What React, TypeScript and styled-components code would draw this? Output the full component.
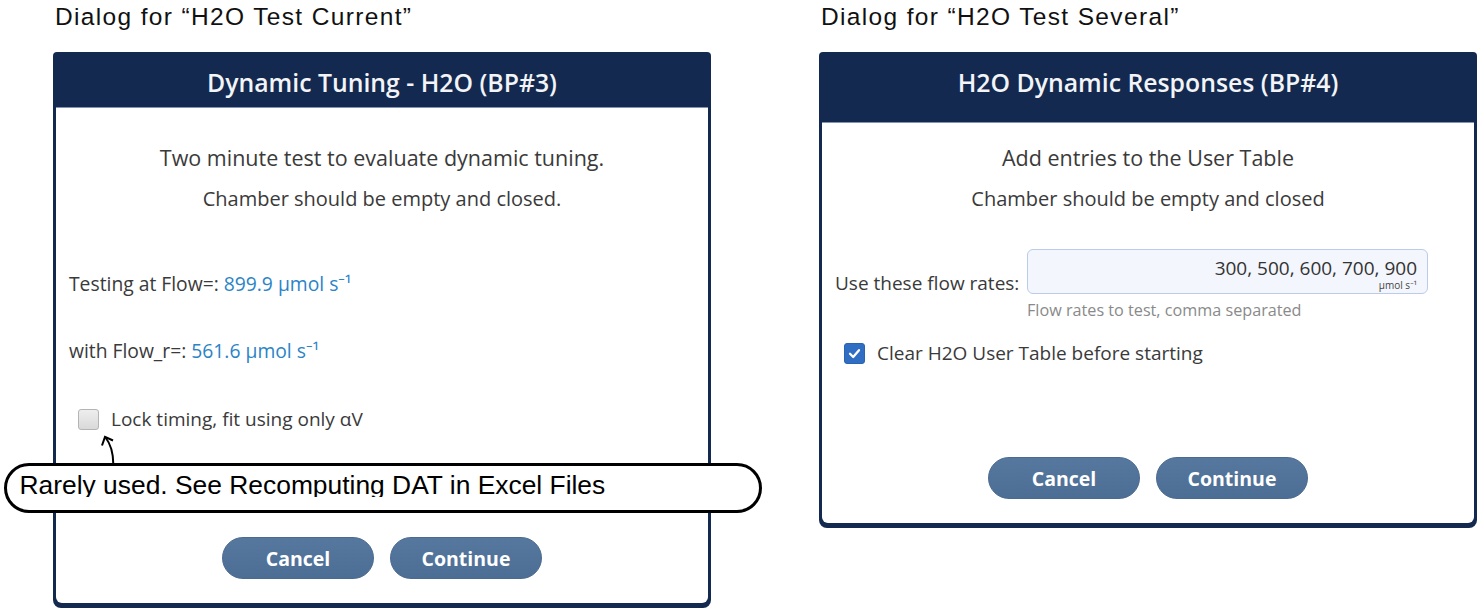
import React from "react";
import styled, { createGlobalStyle } from "styled-components";

const GlobalStyle = createGlobalStyle`
  html, body { margin: 0; padding: 0; background: #ffffff; }
  body { font-family: "Open Sans", "Noto Sans", sans-serif; }
`;

const NAVY = "#13294f";
const TEXT = "#3a3a3a";
const BLUE = "#2b84c7";

const Page = styled.div`
  position: relative;
  width: 1484px;
  height: 612px;
  display: flex;
  gap: 108px;
  padding-left: 53px;
  box-sizing: border-box;
  overflow: hidden;
`;

const Column = styled.div`
  display: flex;
  flex-direction: column;
  width: 658px;
`;

const Caption = styled.div`
  font-family: "Liberation Sans", Arial, sans-serif;
  font-size: 24.5px;
  letter-spacing: 1.35px;
  line-height: 28px;
  padding-top: 3px;
  margin-left: 2px;
  height: 52px;
  box-sizing: border-box;
  color: #111;
  white-space: nowrap;
`;

const Dialog = styled.div`
  width: 658px;
  background: ${NAVY};
  border-radius: 4px 4px 8px 8px;
  display: flex;
  flex-direction: column;
`;

const Header = styled.div<{ $h: number }>`
  height: ${(p) => p.$h}px;
  box-sizing: border-box;
  padding-top: 15px;
  text-align: center;
  color: #f2f4f7;
  font-size: 24.8px;
  font-weight: 600;
  line-height: 30px;
  white-space: nowrap;
`;

const Body = styled.div`
  background: #ffffff;
  margin: 0 3px 5px;
  border-top: 1px solid #8494b0;
  border-radius: 0 0 6px 6px;
  padding: 0 13px 24px;
  display: flex;
  flex-direction: column;
  color: ${TEXT};
`;

const Intro = styled.div<{ $mt: number; $size: number }>`
  margin-top: ${(p) => p.$mt}px;
  text-align: center;
  font-size: ${(p) => p.$size}px;
  line-height: 28px;
  white-space: nowrap;
`;

const InfoLine = styled.div<{ $mt: number }>`
  margin-top: ${(p) => p.$mt}px;
  font-size: 19.3px;
  line-height: 28px;
  white-space: nowrap;
`;

const Value = styled.span`
  color: ${BLUE};
`;

const CheckRow = styled.label<{ $mt: number }>`
  margin-top: ${(p) => p.$mt}px;
  margin-left: 9px;
  height: 28px;
  display: flex;
  align-items: center;
  gap: 12px;
  font-size: 19px;
  line-height: 28px;
  white-space: nowrap;
`;

const Box = styled.span<{ $checked?: boolean }>`
  width: 21px;
  height: 21px;
  box-sizing: border-box;
  border-radius: 3px;
  display: inline-flex;
  align-items: center;
  justify-content: center;
  flex: none;
  ${(p) =>
    p.$checked
      ? `background: #2f6ec2; border: 1px solid #2a63ae;`
      : `background: linear-gradient(#eeeeee, #d9d9d9); border: 1px solid #b4b4b4;`}
`;

const Buttons = styled.div<{ $mt: number }>`
  margin-top: ${(p) => p.$mt}px;
  display: flex;
  justify-content: center;
  gap: 16px;
`;

const Button = styled.button`
  width: 152px;
  height: 42px;
  border-radius: 21px;
  border: 1px solid #4a6a90;
  background: linear-gradient(#56789e, #4c6d94);
  color: #ffffff;
  font-family: "Open Sans", sans-serif;
  font-size: 19.5px;
  font-weight: 700;
  padding: 0;
  cursor: pointer;
`;

const FlowRow = styled.div`
  margin-top: 36px;
  display: grid;
  grid-template-columns: 192px 401px;
`;

const FlowLabel = styled.div`
  margin-top: 20px;
  font-size: 19px;
  line-height: 28px;
  white-space: nowrap;
`;

const InputBox = styled.div`
  height: 45px;
  box-sizing: border-box;
  border: 1px solid #bccbea;
  border-radius: 6px;
  background: #f3f6fd;
  padding: 7px 10px 0;
  text-align: right;
  color: #333;
`;

const InputValue = styled.div`
  font-size: 19px;
  line-height: 22px;
`;

const InputUnit = styled.div`
  font-size: 10px;
  line-height: 12px;
  color: #444;
`;

const Helper = styled.div`
  grid-column: 2;
  margin-top: 3px;
  font-size: 16.2px;
  line-height: 20px;
  color: #8a8a8a;
  white-space: nowrap;
`;

const Callout = styled.div`
  position: absolute;
  left: 4px;
  top: 463px;
  width: 758px;
  height: 50px;
  box-sizing: border-box;
  border: 3.5px solid #000;
  border-radius: 25px;
  background: #ffffff;
  padding-left: 12.5px;
  font-family: "Liberation Sans", Arial, sans-serif;
  font-size: 26.4px;
  color: #000;
`;

const CalloutText = styled.div`
  height: 30.5px;
  box-sizing: border-box;
  overflow: hidden;
  line-height: 30px;
  padding-top: 3.5px;
  white-space: nowrap;
`;

const Arrow = styled.svg`
  position: absolute;
  left: 95px;
  top: 430px;
  width: 25px;
  height: 36px;
  overflow: visible;
`;

function Check() {
  return (
    <svg width="15" height="15" viewBox="0 0 15 15">
      <path d="M3 7.8 L6.2 11 L12 4.2" fill="none" stroke="#fff" strokeWidth="2.3" strokeLinecap="round" strokeLinejoin="round" />
    </svg>
  );
}

export default function App() {
  return (
    <>
      <GlobalStyle />
      <Page>
        <Column>
          <Caption>Dialog for “H2O Test Current”</Caption>
          <Dialog>
            <Header $h={55}>Dynamic Tuning - H2O (BP#3)</Header>
            <Body>
              <Intro $mt={36} $size={21.5}>Two minute test to evaluate dynamic tuning.</Intro>
              <Intro $mt={13} $size={20}>Chamber should be empty and closed.</Intro>
              <InfoLine $mt={57}>
                Testing at Flow=: <Value>899.9 μmol s⁻¹</Value>
              </InfoLine>
              <InfoLine $mt={39}>
                with Flow_r=: <Value>561.6 μmol s⁻¹</Value>
              </InfoLine>
              <CheckRow $mt={40}>
                <Box />
                Lock timing, fit using only αV
              </CheckRow>
              <Buttons $mt={104}>
                <Button>Cancel</Button>
                <Button>Continue</Button>
              </Buttons>
            </Body>
          </Dialog>
        </Column>
        <Column>
          <Caption>Dialog for “H2O Test Several”</Caption>
          <Dialog>
            <Header $h={70}>H2O Dynamic Responses (BP#4)</Header>
            <Body>
              <Intro $mt={21} $size={21.5}>Add entries to the User Table</Intro>
              <Intro $mt={13} $size={20}>Chamber should be empty and closed</Intro>
              <FlowRow>
                <FlowLabel>Use these flow rates:</FlowLabel>
                <InputBox>
                  <InputValue>300, 500, 600, 700, 900</InputValue>
                  <InputUnit>μmol s⁻¹</InputUnit>
                </InputBox>
                <Helper>Flow rates to test, comma separated</Helper>
              </FlowRow>
              <CheckRow $mt={19}>
                <Box $checked>
                  <Check />
                </Box>
                Clear H2O User Table before starting
              </CheckRow>
              <Buttons $mt={90}>
                <Button>Cancel</Button>
                <Button>Continue</Button>
              </Buttons>
            </Body>
          </Dialog>
        </Column>
        <Callout>
          <CalloutText>Rarely used. See Recomputing DAT in Excel Files</CalloutText>
        </Callout>
        <Arrow viewBox="0 0 25 36">
          <path d="M18.3 34 C18.2 25, 16.5 15, 10.5 7.5" fill="none" stroke="#000" strokeWidth="2" />
          <path d="M7 15.5 L10 6.8 L18 10.5" fill="none" stroke="#000" strokeWidth="2" strokeLinejoin="miter" />
        </Arrow>
      </Page>
    </>
  );
}
